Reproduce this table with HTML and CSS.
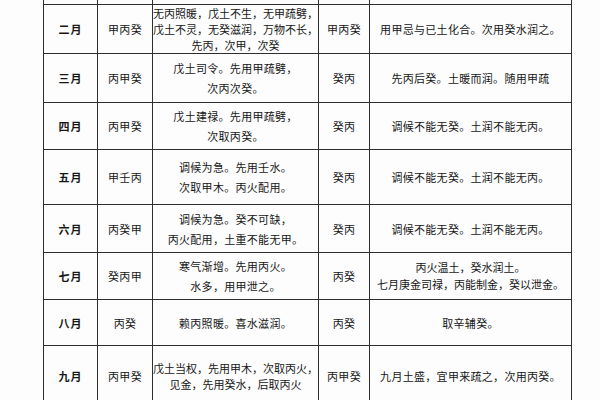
FILE: index.html
```html
<!DOCTYPE html>
<html lang="zh">
<head>
<meta charset="utf-8">
<link rel="stylesheet" href="styles.css">
</head>
<body>
<div class="page">
<table class="sheet">
<colgroup>
<col class="c-month"><col class="c-gan"><col class="c-note"><col class="c-gan2"><col class="c-note2">
</colgroup>
<tbody>
<tr class="cut"><td></td><td></td><td></td><td></td><td></td></tr>
<tr class="h45">
<td class="m">二月</td><td>甲丙癸</td>
<td class="dense">无丙照暖，戊土不生，无甲疏劈，<br>戊土不灵，无癸滋润，万物不长，<br>先丙，次甲，次癸</td>
<td>甲丙癸</td><td>用甲忌与已土化合。次用癸水润之。</td>
</tr>
<tr class="h50">
<td class="m">三月</td><td>丙甲癸</td>
<td>戊土司令。先用甲疏劈，<br>次丙次癸。</td>
<td>癸丙</td><td>先丙后癸。土暖而润。随用甲疏</td>
</tr>
<tr class="h48">
<td class="m">四月</td><td>丙甲癸</td>
<td>戊土建禄。先用甲疏劈，<br>次取丙癸。</td>
<td>癸丙</td><td>调候不能无癸。土润不能无丙。</td>
</tr>
<tr class="h56">
<td class="m">五月</td><td>甲壬丙</td>
<td>调候为急。先用壬水。<br>次取甲木。丙火配用。</td>
<td>癸丙</td><td>调候不能无癸。土润不能无丙。</td>
</tr>
<tr class="h49">
<td class="m">六月</td><td>丙癸甲</td>
<td>调候为急。癸不可缺，<br>丙火配用，土重不能无甲。</td>
<td>癸丙</td><td>调候不能无癸。土润不能无丙。</td>
</tr>
<tr class="h48b">
<td class="m">七月</td><td>癸丙甲</td>
<td>寒气渐增。先用丙火。<br>水多，用甲泄之。</td>
<td>丙癸</td><td class="wide">丙火温土，癸水润土。<br>七月庚金司禄，丙能制金，癸以泄金。</td>
</tr>
<tr class="h47">
<td class="m">八月</td><td>丙癸</td>
<td>赖丙照暖。喜水滋润。</td>
<td>丙癸</td><td>取辛辅癸。</td>
</tr>
<tr class="h60">
<td class="m">九月</td><td>丙甲癸</td>
<td class="dense">戊土当权，先用甲木，次取丙火，<br>见金，先用癸水，后取丙火</td>
<td>丙甲癸</td><td>九月土盛，宜甲来疏之，次用丙癸。</td>
</tr>
</tbody>
</table>
</div>
</body>
</html>
```
FILE: styles.css
```css
html, body {
  margin: 0;
  padding: 0;
  background: #fdfdfd;
}
.page {
  width: 600px;
  height: 400px;
  overflow: hidden;
  padding-left: 43px;
  box-sizing: border-box;
}
.sheet {
  border-collapse: collapse;
  table-layout: fixed;
  width: 528px;
  font-family: "Noto Sans CJK SC", "Noto Sans CJK JP", sans-serif;
  font-size: 11px;
  color: #161616;
}
.c-month { width: 54px; }
.c-gan { width: 55px; }
.c-note { width: 166px; }
.c-gan2 { width: 51px; }
.c-note2 { width: 202px; }
.sheet td {
  border: 1.5px solid #2e2e2e;
  text-align: center;
  vertical-align: middle;
  padding: 0;
  line-height: 20px;
  letter-spacing: 0.3px;
  white-space: nowrap;
  overflow: hidden;
}
.sheet tr.cut td {
  border-top: none;
  height: 4px;
}
.sheet td.m {
  letter-spacing: 1px;
  font-weight: 700;
}
.sheet td.dense {
  line-height: 16px;
  letter-spacing: 0;
}
.sheet td.wide {
  letter-spacing: 0;
  line-height: 17px;
}
.h45 td { height: 43px; }
.h50 td { height: 48px; }
.h48 td { height: 46px; }
.h56 td { height: 54px; }
.h49 td { height: 47px; }
.h48b td { height: 46px; }
.h47 td { height: 45px; }
.h60 td { height: 59px; }
```
